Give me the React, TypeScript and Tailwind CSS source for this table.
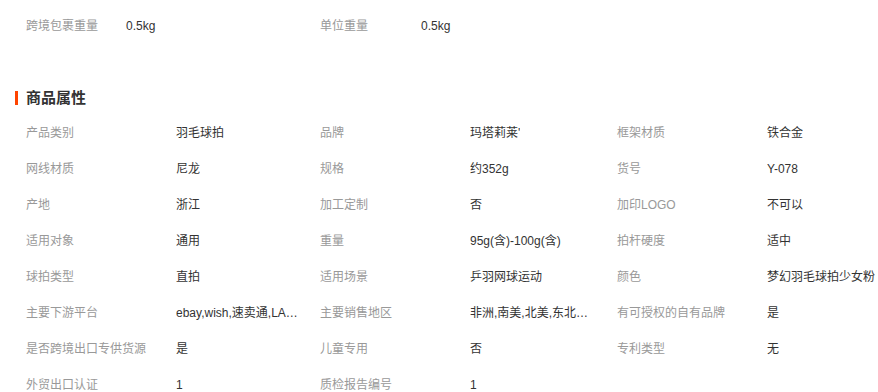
const font = { fontFamily: '"Liberation Sans", "Noto Sans CJK SC", sans-serif' };

const attrs: [string, string][] = [
  ["产品类别", "羽毛球拍"],
  ["品牌", "玛塔莉莱'"],
  ["框架材质", "铁合金"],
  ["网线材质", "尼龙"],
  ["规格", "约352g"],
  ["货号", "Y-078"],
  ["产地", "浙江"],
  ["加工定制", "否"],
  ["加印LOGO", "不可以"],
  ["适用对象", "通用"],
  ["重量", "95g(含)-100g(含)"],
  ["拍杆硬度", "适中"],
  ["球拍类型", "直拍"],
  ["适用场景", "乒羽网球运动"],
  ["颜色", "梦幻羽毛球拍少女粉"],
  ["主要下游平台", "ebay,wish,速卖通,LAZADA,亚马逊"],
  ["主要销售地区", "非洲,南美,北美,东北亚,欧洲"],
  ["有可授权的自有品牌", "是"],
  ["是否跨境出口专供货源", "是"],
  ["儿童专用", "否"],
  ["专利类型", "无"],
  ["外贸出口认证", "1"],
  ["质检报告编号", "1"],
];

export default function App() {
  return (
    <div className="bg-white w-[878px] h-[392px] overflow-hidden text-[12px]" style={font}>
      {/* package info */}
      <div className="flex pl-[26px] pt-[8px]">
        <div className="flex w-[294px] h-[36px] items-center">
          <span className="w-[100px] text-[#999]">跨境包裹重量</span>
          <span className="text-[#333]">0.5kg</span>
        </div>
        <div className="flex h-[36px] items-center">
          <span className="w-[101px] text-[#999]">单位重量</span>
          <span className="text-[#333]">0.5kg</span>
        </div>
      </div>

      {/* attributes */}
      <div className="mt-[44px] flex items-center h-[20px] pl-[15px]">
        <span className="w-[3px] h-[14px] bg-[#ff4400] mr-[8px]" />
        <h2 className="text-[15px] font-bold text-[#333]">商品属性</h2>
      </div>
      <div className="mt-[7px] pl-[26px] grid grid-cols-[294px_297px_260px]">
        {attrs.map(([k, v]) => (
          <div key={k} className="flex h-[36px] items-center">
            <span className="w-[150px] shrink-0 text-[#999] whitespace-nowrap">{k}</span>
            <span className="max-w-[124px] text-[#333] whitespace-nowrap overflow-hidden text-ellipsis">{v}</span>
          </div>
        ))}
      </div>
    </div>
  );
}
